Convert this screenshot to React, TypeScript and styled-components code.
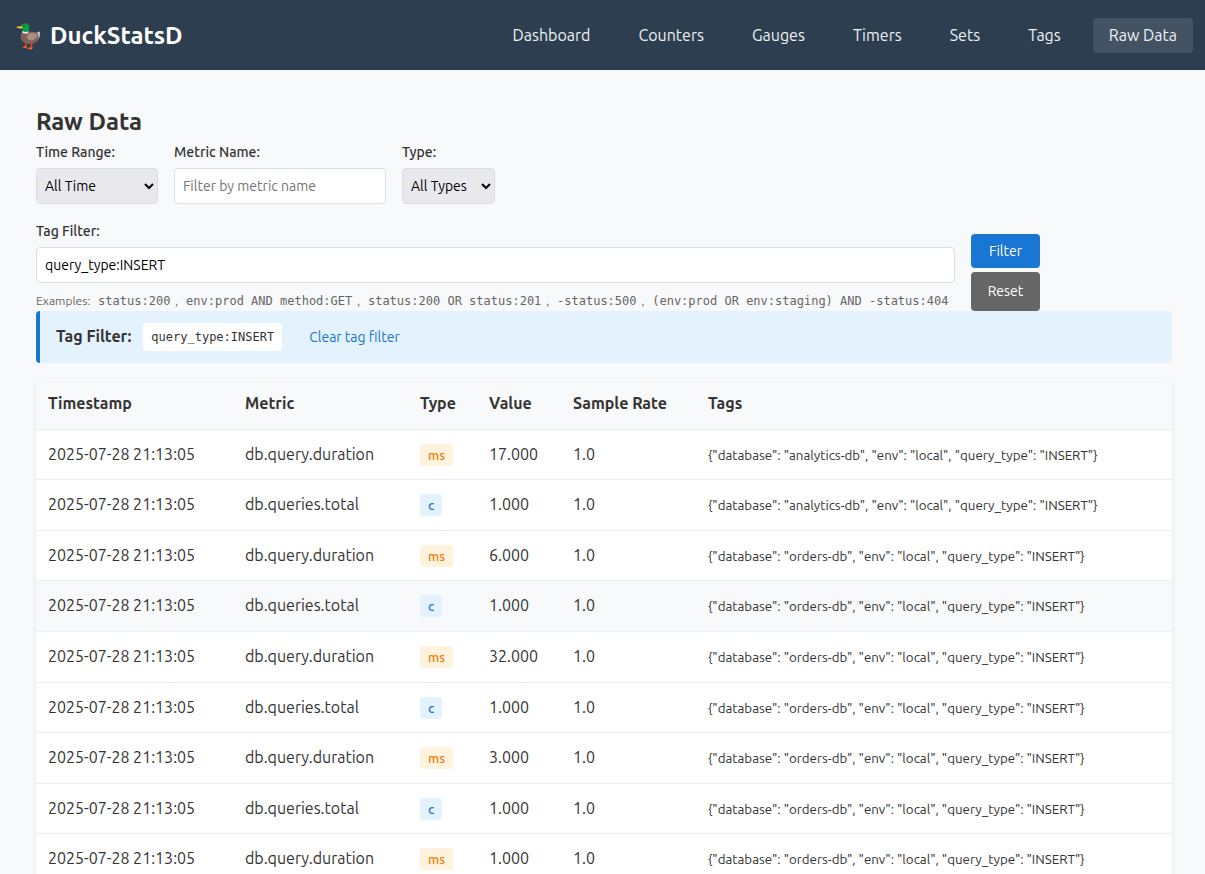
import React from "react";
import styled, { createGlobalStyle } from "styled-components";

const GlobalStyle = createGlobalStyle`
  * { margin: 0; padding: 0; box-sizing: border-box; }
  body {
    font-family: Ubuntu, Roboto, "Noto Sans", sans-serif;
    font-size: 16px;
    line-height: 1.6;
    color: #333;
    background: #f8f9fb;
  }
`;

const mono = `"DejaVu Sans Mono", monospace`;

const NavBar = styled.nav`
  display: flex;
  align-items: center;
  justify-content: space-between;
  height: 70px;
  padding: 0 12px 0 16px;
  background: #2c3e50;
  color: #fff;
`;
const Brand = styled.div`
  display: flex;
  align-items: center;
  gap: 8px;
  padding-top: 2px;
  font-size: 24px;
  font-weight: 600;
`;
const DuckIcon = styled.svg`
  width: 26px;
  height: 28px;
`;
const NavLinks = styled.ul`
  display: flex;
  gap: 16px;
  list-style: none;
`;
const NavLink = styled.a<{ $active?: boolean }>`
  display: block;
  padding: 0 16px;
  line-height: 35px;
  border-radius: 4px;
  color: #ecf0f1;
  text-decoration: none;
  background: ${(p) => (p.$active ? "#435363" : "transparent")};
`;
const Main = styled.main`
  padding: 32px 33px 32px 36px;
`;
const Title = styled.h2`
  font-size: 24px;
  line-height: 39px;
  font-weight: 600;
`;
const Filters = styled.form`
  display: flex;
  flex-direction: column;
  gap: 16px;
`;
const FilterRow = styled.div`
  display: flex;
  align-items: flex-end;
  gap: 16px;
`;
const Field = styled.div<{ $grow?: boolean }>`
  display: flex;
  flex-direction: column;
  gap: 4px;
  ${(p) => p.$grow && "flex: 0 1 919px;"}
`;
const Label = styled.label`
  font-size: 14px;
  line-height: 23px;
  font-weight: 500;
`;
const Input = styled.input`
  width: 100%;
  min-width: 212px;
  height: 36px;
  padding: 0 8px;
  border: 1px solid #ddd;
  border-radius: 4px;
  background: #fff;
  color: #000;
  font: inherit;
  font-size: 14px;
  &::placeholder { color: #757575; }
`;
const Select = styled.select<{ $width: number }>`
  width: ${(p) => p.$width}px;
  height: 36px;
  padding: 0 4px;
  border: 1px solid #ddd;
  border-radius: 4px;
  background: #e9e9ed;
  color: #000;
  font: inherit;
  font-size: 14px;
`;
const Hint = styled.small`
  margin-top: 4px;
  font-size: 12px;
  line-height: 20px;
  color: #666;
  white-space: nowrap;
`;
const Example = styled.code`
  padding: 0 5px;
  font-family: ${mono};
  font-size: 12px;
`;
const Actions = styled.div`
  display: flex;
  flex-direction: column;
  gap: 4px;
  width: 69px;
`;
const FilterButton = styled.button`
  height: 34px;
  border: 0;
  border-radius: 4px;
  background: #1976d2;
  color: #fff;
  font: inherit;
  font-size: 14px;
`;
const ResetLink = styled.a`
  line-height: 39px;
  border-radius: 4px;
  background: #666;
  color: #fff;
  font-size: 14px;
  text-align: center;
  text-decoration: none;
`;
const Banner = styled.div`
  display: flex;
  align-items: center;
  height: 52px;
  margin-bottom: 16px;
  padding: 0 16px;
  border-left: 4px solid #1976d2;
  border-radius: 4px;
  background: #e3f2fd;
`;
const BannerTitle = styled.strong`
  font-weight: 600;
`;
const BannerCode = styled.code`
  margin: 0 27px 0 12px;
  padding: 0 8px;
  border-radius: 3px;
  background: #fff;
  font-family: ${mono};
  font-size: 12px;
  line-height: 28px;
`;
const ClearLink = styled.a`
  color: #1976d2;
  font-size: 14px;
  text-decoration: none;
`;
const Table = styled.table`
  width: 100%;
  table-layout: fixed;
  border-collapse: separate;
  border-spacing: 0;
  overflow: hidden;
  border-radius: 8px;
  background: #fff;
  box-shadow: 0 2px 4px rgba(0, 0, 0, 0.1);
`;
const Col = styled.col<{ $width?: number }>`
  ${(p) => p.$width && `width: ${p.$width}px;`}
`;
const HeadCell = styled.th`
  padding: 12px;
  border-bottom: 1px solid #eee;
  background: #f8f9fa;
  text-align: left;
  font-weight: 600;
`;
const Row = styled.tr<{ $hovered?: boolean }>`
  background: ${(p) => (p.$hovered ? "#f8f9fa" : "#fff")};
`;
const Cell = styled.td`
  padding: 12px;
  border-bottom: 1px solid #eee;
  white-space: nowrap;
`;
const Badge = styled.span<{ $kind: string }>`
  padding: 4px 8px;
  border-radius: 3px;
  font-size: 13px;
  font-weight: 500;
  color: ${(p) => (p.$kind === "ms" ? "#f57c00" : "#1976d2")};
  background: ${(p) => (p.$kind === "ms" ? "#fff3e0" : "#e3f2fd")};
`;
const TagText = styled.small`
  font-size: smaller;
`;

const links = ["Dashboard", "Counters", "Gauges", "Timers", "Sets", "Tags", "Raw Data"];
const examples = [
  "status:200",
  "env:prod AND method:GET",
  "status:200 OR status:201",
  "-status:500",
  "(env:prod OR env:staging) AND -status:404",
];
const columns = [
  { name: "Timestamp", width: 197 },
  { name: "Metric", width: 175 },
  { name: "Type", width: 69 },
  { name: "Value", width: 84 },
  { name: "Sample Rate", width: 135 },
  { name: "Tags" },
];
const rows = [
  { type: "ms", value: "17.000", db: "analytics-db" },
  { type: "c", value: "1.000", db: "analytics-db" },
  { type: "ms", value: "6.000", db: "orders-db" },
  { type: "c", value: "1.000", db: "orders-db", hovered: true },
  { type: "ms", value: "32.000", db: "orders-db" },
  { type: "c", value: "1.000", db: "orders-db" },
  { type: "ms", value: "3.000", db: "orders-db" },
  { type: "c", value: "1.000", db: "orders-db" },
  { type: "ms", value: "1.000", db: "orders-db" },
];

const Duck = () => (
  <DuckIcon viewBox="0 0 26 28" aria-hidden="true">
    <path d="M10 21 L9.5 25 M15.500 21 L15.500 26" stroke="#e64a19" strokeWidth="1.6" />
    <path d="M6.500 25.800 L8 24 L11 24.300 L10.500 26.500 L8.500 25.800Z M11 27 L13 25.300 L16.500 25.500 L16 27.500 L13.500 27.200Z" fill="#ff5a1f" />
    <path d="M6 10 C4 13 4 18 8 20.500 C13 23.500 20 22 22.500 17.500 C23.500 15.500 24.500 12.500 23.500 9.500 C21.500 11 18 10 15 9.800 L12 9.500Z" fill="#806154" />
    <path d="M11.500 13 C13 10 19 11 21.500 12 C21 17 16 19.500 13 18 C11 17 10.800 15 11.500 13Z" fill="#a98f81" />
    <path d="M21 10.200 C23 10.200 24 9.500 23.800 9 C24.800 12 23.800 15 22.300 17 C22.500 14.500 22.500 12.500 21 10.200Z" fill="#b0bec5" />
    <path d="M6.500 9 L12.500 9 L12 11 C10 11.800 8 11.800 6.300 10.800Z" fill="#eceff1" />
    <path d="M5.500 3.500 C6.500 .500 12.500 .500 13.200 4.500 C13.500 6.500 13 8 12.500 9.300 C10.500 10.300 8 10 6.500 9 C6.800 7.500 5.500 6.500 5.500 3.500Z" fill="#0a9d43" />
    <path d="M6 3.800 C4.500 4.800 3 4.300 .500 4.500 C.300 6 2 6.500 6 6.500 C6.600 5.500 6.500 4.500 6 3.800Z" fill="#fbc02d" />
    <circle cx="8" cy="3.800" r=".7" fill="#1b3b27" />
  </DuckIcon>
);

export default function App() {
  return (
    <>
      <GlobalStyle />
      <NavBar>
        <Brand>
          <Duck />
          DuckStatsD
        </Brand>
        <NavLinks>
          {links.map((name) => (
            <li key={name}>
              <NavLink href="#" $active={name === "Raw Data"}>{name}</NavLink>
            </li>
          ))}
        </NavLinks>
      </NavBar>
      <Main>
        <Title>Raw Data</Title>
        <Filters>
          <FilterRow>
            <Field>
              <Label htmlFor="range">Time Range:</Label>
              <Select id="range" $width={122}><option>All Time</option></Select>
            </Field>
            <Field>
              <Label htmlFor="metric">Metric Name:</Label>
              <Input id="metric" placeholder="Filter by metric name" />
            </Field>
            <Field>
              <Label htmlFor="type">Type:</Label>
              <Select id="type" $width={93}><option>All Types</option></Select>
            </Field>
          </FilterRow>
          <FilterRow>
            <Field $grow>
              <Label htmlFor="tags">Tag Filter:</Label>
              <Input id="tags" defaultValue="query_type:INSERT" />
              <Hint>
                Examples:{" "}
                {examples.map((text, i) => (
                  <React.Fragment key={text}>
                    {i > 0 && ", "}
                    <Example>{text}</Example>
                  </React.Fragment>
                ))}
              </Hint>
            </Field>
            <Actions>
              <FilterButton type="button">Filter</FilterButton>
              <ResetLink href="#">Reset</ResetLink>
            </Actions>
          </FilterRow>
        </Filters>
        <Banner>
          <BannerTitle>Tag Filter:</BannerTitle>
          <BannerCode>query_type:INSERT</BannerCode>
          <ClearLink href="#">Clear tag filter</ClearLink>
        </Banner>
        <Table>
          <colgroup>
            {columns.map((c) => <Col key={c.name} $width={c.width} />)}
          </colgroup>
          <thead>
            <tr>{columns.map((c) => <HeadCell key={c.name} scope="col">{c.name}</HeadCell>)}</tr>
          </thead>
          <tbody>
            {rows.map((row, i) => (
              <Row key={i} $hovered={row.hovered}>
                <Cell>2025-07-28 21:13:05</Cell>
                <Cell>{row.type === "ms" ? "db.query.duration" : "db.queries.total"}</Cell>
                <Cell><Badge $kind={row.type}>{row.type}</Badge></Cell>
                <Cell>{row.value}</Cell>
                <Cell>1.0</Cell>
                <Cell>
                  <TagText>{`{"database": "${row.db}", "env": "local", "query_type": "INSERT"}`}</TagText>
                </Cell>
              </Row>
            ))}
          </tbody>
        </Table>
      </Main>
    </>
  );
}
